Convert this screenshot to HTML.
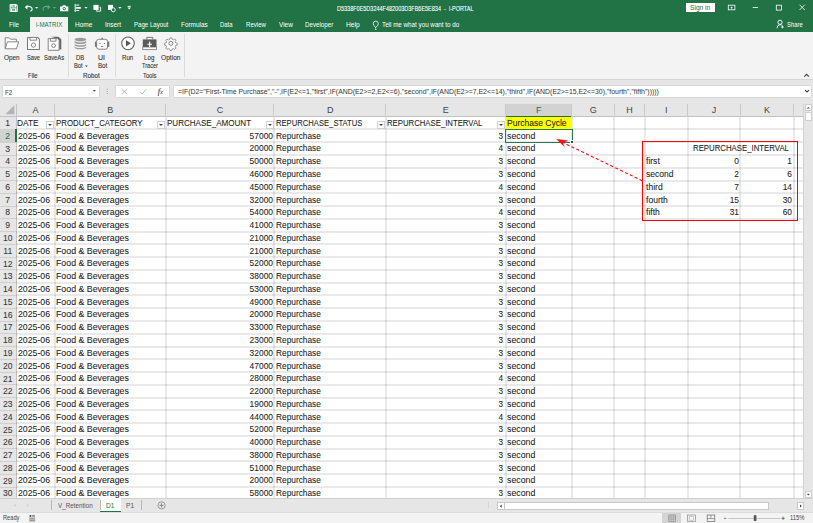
<!DOCTYPE html><html><head><meta charset="utf-8"><style>
*{margin:0;padding:0;box-sizing:border-box}
html,body{width:813px;height:523px;overflow:hidden;background:#fff;font-family:"Liberation Sans",sans-serif;position:relative}
.a{position:absolute}
.t{position:absolute;white-space:nowrap;line-height:1}
.s{-webkit-text-stroke:0.07px currentColor}
.s2{-webkit-text-stroke:0.1px currentColor}
svg{position:absolute;overflow:visible}
</style></head><body><div class="a" style="left:0;top:0;width:813px;height:31.5px;background:#217346"></div>
<svg style="left:0;top:0" width="140" height="17" viewBox="0 0 140 17">
<g fill="none" stroke="#fff" stroke-width="1.1">
<path d="M10.2 4.8h6.2l0.8 0.8v5.6h-7z"/><rect x="11.8" y="4.8" width="3.8" height="2.2"/><rect x="11.6" y="8.8" width="4.2" height="2.4"/>
<path d="M26 7.3 q3.5-2.2 5.8 0.6 q1.2 2.2-1.4 3.3"/>
</g>
<path d="M24.8 7.2l2.6-2.4v4.6z" fill="#fff"/>
<path d="M34.9 7.1h3.4l-1.7 1.7z" fill="#fff"/>
<g opacity="0.35"><path d="M49 7.3 q-3.5-2.2 -5.8 0.6 q-0.6 1.4 0.4 2.6" fill="none" stroke="#fff" stroke-width="1.1"/><path d="M50.3 7.2l-2.6-2.4v4.6z" fill="#fff"/><path d="M52.9 7.1h3.2l-1.6 1.6z" fill="#fff"/></g>
<path d="M60.1 6.4h2l0.9-1.1h2.4l0.9 1.1h2v4.8h-8.2z" fill="#fff"/><circle cx="64.2" cy="8.6" r="1.6" fill="#217346"/><circle cx="64.2" cy="8.6" r="0.8" fill="#fff"/>
<g fill="#fff"><rect x="74.7" y="3.9" width="1" height="8.1"/><rect x="76.2" y="4.6" width="3" height="1"/><rect x="76.2" y="7" width="4.6" height="1.8"/><rect x="76.2" y="10" width="3" height="1"/></g>
<path d="M84.4 7.1h3.2l-1.6 1.6z" fill="#fff"/>
<rect x="93.4" y="4.9" width="5.2" height="5" fill="#fff"/><path d="M99.6 7.2h1v4h-4.2v-1" fill="none" stroke="#fff" stroke-width="0.9"/>
<rect x="108" y="4.9" width="5" height="5" fill="#fff"/><circle cx="113.3" cy="9.8" r="2" fill="#217346" stroke="#fff" stroke-width="0.9"/>
<path d="M118.3 7.1h3.2l-1.6 1.6z" fill="#fff"/>
<rect x="127.6" y="5.9" width="3.2" height="0.9" fill="#fff"/><path d="M127.5 7.6h3.4l-1.7 2z" fill="#fff"/>
</svg>
<div class="a" style="left:685.5px;top:2.6px;width:29.4px;height:9.7px;background:#fff"></div>
<svg style="left:720px;top:0" width="93" height="32" viewBox="720 0 93 32">
<rect x="728.3" y="5.2" width="6.6" height="4.6" fill="none" stroke="#fff" stroke-width="0.8"/><path d="M730.4 7.9l1.2-1.4 1.2 1.4z" fill="#fff"/><rect x="731.3" y="7.6" width="0.6" height="1.6" fill="#fff"/>
<rect x="752.7" y="7.2" width="5.3" height="0.8" fill="#fff"/>
<rect x="776.3" y="5.2" width="5.2" height="4.9" fill="none" stroke="#fff" stroke-width="0.8"/>
<path d="M799.5 4.7l5.3 5.3M804.8 4.7l-5.3 5.3" stroke="#fff" stroke-width="0.8"/>
<circle cx="780" cy="22.3" r="2.1" fill="none" stroke="#fff" stroke-width="0.9"/><path d="M776.9 28.2q0.5-3.6 3.1-3.6q1.6 0 2.5 1.3" fill="none" stroke="#fff" stroke-width="0.9"/><path d="M782.4 25.6v2.8M781 27h2.8" stroke="#fff" stroke-width="0.8"/>
</svg>
<div class="a" style="left:30.1px;top:17px;width:37.9px;height:15px;background:#f3f3f3"></div>
<svg style="left:370px;top:17px" width="12" height="15" viewBox="370 17 12 15"><path d="M375.6 28.6v-1.4q-2.3-1.4-2.3-3.6a2.5 2.5 0 0 1 5 0q0 2.2-2.3 3.6" fill="none" stroke="#fff" stroke-width="0.8"/><rect x="374.9" y="28.9" width="1.6" height="0.7" fill="#fff"/></svg>
<div class="a" style="left:0;top:31.5px;width:813px;height:48px;background:#f3f3f3;border-bottom:1px solid #d6d6d6"></div>
<div class="a" style="left:67.7px;top:34px;width:1px;height:42.5px;background:#dcdcdc"></div>
<div class="a" style="left:114.9px;top:34px;width:1px;height:42.5px;background:#dcdcdc"></div>
<div class="a" style="left:184px;top:34px;width:1px;height:42.5px;background:#dcdcdc"></div>
<svg style="left:0;top:32px" width="190" height="20" viewBox="0 32 190 20">
<g fill="#fcfcfc" stroke="#7a7a7a" stroke-width="0.9" stroke-linejoin="round">
<path d="M5.2 48.8v-11h4l1.2 1.4h6v2.4"/><path d="M5.2 48.8l2.2-7h11.3l-2.2 7z"/>
<path d="M27.5 37.4h10.2l1.7 1.7v10.4h-11.9z" stroke-width="1.05"/><rect x="30" y="37.4" width="6.6" height="2.8"/><circle cx="33.5" cy="45.1" r="2.1"/>
</g><path d="M51 36.7h7.4l2.9 2.6v10.3h-2.2v-10z" fill="#666"/><g fill="#fcfcfc" stroke="#7a7a7a" stroke-width="0.9" stroke-linejoin="round"><path d="M48.2 38.6h9.4l1.5 1.5v10.2h-10.9z"/><rect x="50.4" y="38.6" width="5.6" height="2.6"/><circle cx="53.6" cy="45.6" r="1.9"/>
</g>
<g fill="#9a9a9a">
<ellipse cx="80.4" cy="39.6" rx="5.8" ry="1.8"/>
<path d="M74.6 40.6v1.6q0 1.8 5.8 1.8t5.8-1.8v-1.6q0 1.8-5.8 1.8t-5.8-1.8z"/>
<path d="M74.6 43.4v1.6q0 1.8 5.8 1.8t5.8-1.8v-1.6q0 1.8-5.8 1.8t-5.8-1.8z"/>
<path d="M74.6 46.2v1.3q0 1.8 5.8 1.8t5.8-1.8v-1.3q0 1.8-5.8 1.8t-5.8-1.8z"/>
</g>
<rect x="96.6" y="39.3" width="11" height="9.9" rx="2.2" fill="#fbfbfb" stroke="#777" stroke-width="0.9"/>
<rect x="94.9" y="41.6" width="1.8" height="5.2" fill="#777"/><rect x="107.5" y="41.6" width="1.8" height="5.2" fill="#777"/>
<rect x="101.4" y="37.7" width="1.4" height="1.6" fill="#777"/>
<rect x="99.4" y="43" width="1.1" height="1" fill="#666"/><rect x="103.8" y="43" width="1.1" height="1" fill="#666"/><rect x="101" y="46" width="2.2" height="0.8" fill="#666"/>
<circle cx="128" cy="43.35" r="6.3" fill="#fdfdfd" stroke="#5e5e5e" stroke-width="1.05"/><path d="M126 40.2v6.3l4.9-3.15z" fill="#555"/>
<path d="M146.8 39.4v-2h6v2" fill="none" stroke="#666" stroke-width="0.9"/>
<rect x="142.8" y="39.4" width="13.7" height="7.6" fill="#5a5a5a"/><rect x="142.8" y="47" width="13.7" height="2.7" fill="#f8f8f8" stroke="#666" stroke-width="0.7"/>
<path d="M149.65 41.6v5.4M147.3 44.2h4.7" stroke="#fff" stroke-width="1.1"/>
<g transform="translate(170.9 43.35) scale(0.88)"><path d="M-1 -6.2h2l0.4 1.6 1.5 0.7 1.5-0.9 1.4 1.4-0.9 1.5 0.6 1.5 1.7 0.4v2l-1.7 0.4-0.6 1.5 0.9 1.5-1.4 1.4-1.5-0.9-1.5 0.6-0.4 1.7h-2l-0.4-1.7-1.5-0.6-1.5 0.9-1.4-1.4 0.9-1.5-0.6-1.5-1.7-0.4v-2l1.7-0.4 0.6-1.5-0.9-1.5 1.4-1.4 1.5 0.9 1.5-0.7z" fill="#fcfcfc" stroke="#707070" stroke-width="0.8" stroke-linejoin="round"/><circle r="2.3" fill="none" stroke="#707070" stroke-width="1"/></g>
</svg>
<svg style="left:0;top:0" width="813" height="80"><path d="M84.9 65.6h3l-1.5 1.5z" fill="#444"/><path d="M804.3 76.7l2.3-2.3 2.3 2.3" fill="none" stroke="#444" stroke-width="1.15"/></svg>
<div class="a" style="left:0;top:79.5px;width:813px;height:24.1px;background:#e6e6e6"></div>
<div class="a" style="left:1.5px;top:85.0px;width:98px;height:12.8px;background:#fff;border:1px solid #d6d6d6;border-radius:1.5px"></div>
<div class="a" style="left:114.8px;top:85.0px;width:55.5px;height:12.8px;background:#fff;border:1px solid #d6d6d6;border-radius:1.5px"></div>
<div class="a" style="left:172.6px;top:85.0px;width:639px;height:12.8px;background:#fff;border:1px solid #d6d6d6;border-radius:1.5px"></div>
<svg style="left:0;top:80px" width="813" height="22" viewBox="0 80 813 22">
<path d="M92.6 89.9h3.5l-1.75 1.8z" fill="#555"/>
<g fill="#9a9a9a"><rect x="106.8" y="88.8" width="0.9" height="0.9"/><rect x="106.8" y="91" width="0.9" height="0.9"/><rect x="106.8" y="93.2" width="0.9" height="0.9"/></g>
<path d="M121.6 89.2l5.5 4.8M127.1 89.2l-5.5 4.8" stroke="#a8a8a8" stroke-width="0.8"/>
<path d="M140 91.8l2 2.2 4.2-4.8" fill="none" stroke="#a8a8a8" stroke-width="0.8"/>
<path d="M805 90.1l2 1.9 2-1.9" fill="none" stroke="#444" stroke-width="1.1"/>
</svg>
<div class="a" style="left:0;top:103.6px;width:803.6px;height:13.100000000000009px;background:#e6e6e6"></div>
<div class="a" style="left:0;top:116.7px;width:16px;height:381.7px;background:#e6e6e6"></div>
<div class="a" style="left:15.5px;top:103.6px;width:1px;height:394.79999999999995px;background:#c3c3c3"></div>
<div class="a" style="left:0;top:116.10000000000001px;width:803.6px;height:1px;background:#c3c3c3"></div>
<svg style="left:0;top:100px" width="20" height="20" viewBox="0 100 20 20"><path d="M14.3 105.3v9h-8.9z" fill="#b4b4b4"/></svg>
<div class="a" style="left:505.5px;top:103.6px;width:66.5px;height:13.100000000000009px;background:#d2d2d2;border-bottom:1.6px solid #217346"></div>
<div class="a" style="left:54px;top:103.6px;width:1px;height:13.100000000000009px;background:#c9c9c9"></div>
<div class="a" style="left:164.6px;top:103.6px;width:1px;height:13.100000000000009px;background:#c9c9c9"></div>
<div class="a" style="left:273.4px;top:103.6px;width:1px;height:13.100000000000009px;background:#c9c9c9"></div>
<div class="a" style="left:385px;top:103.6px;width:1px;height:13.100000000000009px;background:#c9c9c9"></div>
<div class="a" style="left:504.5px;top:103.6px;width:1px;height:13.100000000000009px;background:#c9c9c9"></div>
<div class="a" style="left:571px;top:103.6px;width:1px;height:13.100000000000009px;background:#c9c9c9"></div>
<div class="a" style="left:613.5px;top:103.6px;width:1px;height:13.100000000000009px;background:#c9c9c9"></div>
<div class="a" style="left:643.7px;top:103.6px;width:1px;height:13.100000000000009px;background:#c9c9c9"></div>
<div class="a" style="left:686.6px;top:103.6px;width:1px;height:13.100000000000009px;background:#c9c9c9"></div>
<div class="a" style="left:739.5px;top:103.6px;width:1px;height:13.100000000000009px;background:#c9c9c9"></div>
<div class="a" style="left:792.6px;top:103.6px;width:1px;height:13.100000000000009px;background:#c9c9c9"></div>
<div class="a" style="left:802.6px;top:103.6px;width:1px;height:13.100000000000009px;background:#c9c9c9"></div>
<div class="t" style="left:16px;width:39px;text-align:center;top:105.6px;font-size:9px;color:#444">A</div>
<div class="t" style="left:55px;width:110.6px;text-align:center;top:105.6px;font-size:9px;color:#444">B</div>
<div class="t" style="left:165.6px;width:108.79999999999998px;text-align:center;top:105.6px;font-size:9px;color:#444">C</div>
<div class="t" style="left:274.4px;width:111.60000000000002px;text-align:center;top:105.6px;font-size:9px;color:#444">D</div>
<div class="t" style="left:386px;width:119.5px;text-align:center;top:105.6px;font-size:9px;color:#444">E</div>
<div class="t" style="left:505.5px;width:66.5px;text-align:center;top:105.6px;font-size:9px;color:#217346">F</div>
<div class="t" style="left:572px;width:42.5px;text-align:center;top:105.6px;font-size:9px;color:#444">G</div>
<div class="t" style="left:614.5px;width:30.200000000000045px;text-align:center;top:105.6px;font-size:9px;color:#444">H</div>
<div class="t" style="left:644.7px;width:42.89999999999998px;text-align:center;top:105.6px;font-size:9px;color:#444">I</div>
<div class="t" style="left:687.6px;width:52.89999999999998px;text-align:center;top:105.6px;font-size:9px;color:#444">J</div>
<div class="t" style="left:740.5px;width:53.10000000000002px;text-align:center;top:105.6px;font-size:9px;color:#444">K</div>
<div class="a" style="left:54px;top:116.7px;width:2px;height:381.7px;background:rgba(0,0,0,0.085)"></div>
<div class="a" style="left:165px;top:116.7px;width:2px;height:381.7px;background:rgba(0,0,0,0.085)"></div>
<div class="a" style="left:273px;top:116.7px;width:2px;height:381.7px;background:rgba(0,0,0,0.085)"></div>
<div class="a" style="left:385px;top:116.7px;width:2px;height:381.7px;background:rgba(0,0,0,0.085)"></div>
<div class="a" style="left:505px;top:116.7px;width:2px;height:381.7px;background:rgba(0,0,0,0.085)"></div>
<div class="a" style="left:571px;top:116.7px;width:2px;height:381.7px;background:rgba(0,0,0,0.085)"></div>
<div class="a" style="left:613px;top:116.7px;width:2px;height:381.7px;background:rgba(0,0,0,0.085)"></div>
<div class="a" style="left:644px;top:116.7px;width:2px;height:381.7px;background:rgba(0,0,0,0.085)"></div>
<div class="a" style="left:687px;top:116.7px;width:2px;height:381.7px;background:rgba(0,0,0,0.085)"></div>
<div class="a" style="left:739px;top:116.7px;width:2px;height:381.7px;background:rgba(0,0,0,0.085)"></div>
<div class="a" style="left:793px;top:116.7px;width:2px;height:381.7px;background:rgba(0,0,0,0.085)"></div>
<div class="a" style="left:803px;top:116.7px;width:2px;height:381.7px;background:rgba(0,0,0,0.085)"></div>
<div class="a" style="left:16px;top:128.47px;width:786.7px;height:2px;background:rgba(0,0,0,0.085)"></div>
<div class="a" style="left:0;top:128.97px;width:15.5px;height:1px;background:#cfcfcf"></div>
<div class="a" style="left:16px;top:141.24px;width:786.7px;height:2px;background:rgba(0,0,0,0.085)"></div>
<div class="a" style="left:0;top:141.74px;width:15.5px;height:1px;background:#cfcfcf"></div>
<div class="a" style="left:16px;top:154.01px;width:786.7px;height:2px;background:rgba(0,0,0,0.085)"></div>
<div class="a" style="left:0;top:154.51px;width:15.5px;height:1px;background:#cfcfcf"></div>
<div class="a" style="left:16px;top:166.78px;width:786.7px;height:2px;background:rgba(0,0,0,0.085)"></div>
<div class="a" style="left:0;top:167.28px;width:15.5px;height:1px;background:#cfcfcf"></div>
<div class="a" style="left:16px;top:179.55px;width:786.7px;height:2px;background:rgba(0,0,0,0.085)"></div>
<div class="a" style="left:0;top:180.05px;width:15.5px;height:1px;background:#cfcfcf"></div>
<div class="a" style="left:16px;top:192.32px;width:786.7px;height:2px;background:rgba(0,0,0,0.085)"></div>
<div class="a" style="left:0;top:192.82px;width:15.5px;height:1px;background:#cfcfcf"></div>
<div class="a" style="left:16px;top:205.09px;width:786.7px;height:2px;background:rgba(0,0,0,0.085)"></div>
<div class="a" style="left:0;top:205.59px;width:15.5px;height:1px;background:#cfcfcf"></div>
<div class="a" style="left:16px;top:217.86px;width:786.7px;height:2px;background:rgba(0,0,0,0.085)"></div>
<div class="a" style="left:0;top:218.36px;width:15.5px;height:1px;background:#cfcfcf"></div>
<div class="a" style="left:16px;top:230.63px;width:786.7px;height:2px;background:rgba(0,0,0,0.085)"></div>
<div class="a" style="left:0;top:231.13px;width:15.5px;height:1px;background:#cfcfcf"></div>
<div class="a" style="left:16px;top:243.40px;width:786.7px;height:2px;background:rgba(0,0,0,0.085)"></div>
<div class="a" style="left:0;top:243.90px;width:15.5px;height:1px;background:#cfcfcf"></div>
<div class="a" style="left:16px;top:256.17px;width:786.7px;height:2px;background:rgba(0,0,0,0.085)"></div>
<div class="a" style="left:0;top:256.67px;width:15.5px;height:1px;background:#cfcfcf"></div>
<div class="a" style="left:16px;top:268.94px;width:786.7px;height:2px;background:rgba(0,0,0,0.085)"></div>
<div class="a" style="left:0;top:269.44px;width:15.5px;height:1px;background:#cfcfcf"></div>
<div class="a" style="left:16px;top:281.71px;width:786.7px;height:2px;background:rgba(0,0,0,0.085)"></div>
<div class="a" style="left:0;top:282.21px;width:15.5px;height:1px;background:#cfcfcf"></div>
<div class="a" style="left:16px;top:294.48px;width:786.7px;height:2px;background:rgba(0,0,0,0.085)"></div>
<div class="a" style="left:0;top:294.98px;width:15.5px;height:1px;background:#cfcfcf"></div>
<div class="a" style="left:16px;top:307.25px;width:786.7px;height:2px;background:rgba(0,0,0,0.085)"></div>
<div class="a" style="left:0;top:307.75px;width:15.5px;height:1px;background:#cfcfcf"></div>
<div class="a" style="left:16px;top:320.02px;width:786.7px;height:2px;background:rgba(0,0,0,0.085)"></div>
<div class="a" style="left:0;top:320.52px;width:15.5px;height:1px;background:#cfcfcf"></div>
<div class="a" style="left:16px;top:332.79px;width:786.7px;height:2px;background:rgba(0,0,0,0.085)"></div>
<div class="a" style="left:0;top:333.29px;width:15.5px;height:1px;background:#cfcfcf"></div>
<div class="a" style="left:16px;top:345.56px;width:786.7px;height:2px;background:rgba(0,0,0,0.085)"></div>
<div class="a" style="left:0;top:346.06px;width:15.5px;height:1px;background:#cfcfcf"></div>
<div class="a" style="left:16px;top:358.33px;width:786.7px;height:2px;background:rgba(0,0,0,0.085)"></div>
<div class="a" style="left:0;top:358.83px;width:15.5px;height:1px;background:#cfcfcf"></div>
<div class="a" style="left:16px;top:371.10px;width:786.7px;height:2px;background:rgba(0,0,0,0.085)"></div>
<div class="a" style="left:0;top:371.60px;width:15.5px;height:1px;background:#cfcfcf"></div>
<div class="a" style="left:16px;top:383.87px;width:786.7px;height:2px;background:rgba(0,0,0,0.085)"></div>
<div class="a" style="left:0;top:384.37px;width:15.5px;height:1px;background:#cfcfcf"></div>
<div class="a" style="left:16px;top:396.64px;width:786.7px;height:2px;background:rgba(0,0,0,0.085)"></div>
<div class="a" style="left:0;top:397.14px;width:15.5px;height:1px;background:#cfcfcf"></div>
<div class="a" style="left:16px;top:409.41px;width:786.7px;height:2px;background:rgba(0,0,0,0.085)"></div>
<div class="a" style="left:0;top:409.91px;width:15.5px;height:1px;background:#cfcfcf"></div>
<div class="a" style="left:16px;top:422.18px;width:786.7px;height:2px;background:rgba(0,0,0,0.085)"></div>
<div class="a" style="left:0;top:422.68px;width:15.5px;height:1px;background:#cfcfcf"></div>
<div class="a" style="left:16px;top:434.95px;width:786.7px;height:2px;background:rgba(0,0,0,0.085)"></div>
<div class="a" style="left:0;top:435.45px;width:15.5px;height:1px;background:#cfcfcf"></div>
<div class="a" style="left:16px;top:447.72px;width:786.7px;height:2px;background:rgba(0,0,0,0.085)"></div>
<div class="a" style="left:0;top:448.22px;width:15.5px;height:1px;background:#cfcfcf"></div>
<div class="a" style="left:16px;top:460.49px;width:786.7px;height:2px;background:rgba(0,0,0,0.085)"></div>
<div class="a" style="left:0;top:460.99px;width:15.5px;height:1px;background:#cfcfcf"></div>
<div class="a" style="left:16px;top:473.26px;width:786.7px;height:2px;background:rgba(0,0,0,0.085)"></div>
<div class="a" style="left:0;top:473.76px;width:15.5px;height:1px;background:#cfcfcf"></div>
<div class="a" style="left:16px;top:486.03px;width:786.7px;height:2px;background:rgba(0,0,0,0.085)"></div>
<div class="a" style="left:0;top:486.53px;width:15.5px;height:1px;background:#cfcfcf"></div>
<div class="a" style="left:16px;top:498.80px;width:786.7px;height:2px;background:rgba(0,0,0,0.085)"></div>
<div class="a" style="left:0;top:499.30px;width:15.5px;height:1px;background:#cfcfcf"></div>
<div class="a" style="left:0;top:129.47px;width:15.5px;height:12.77px;background:#d2d2d2"></div>
<div class="a" style="left:14.9px;top:129.47px;width:1.7px;height:12.77px;background:#217346"></div>
<div class="t s" style="left:0;width:15.5px;text-align:center;top:119.10px;font-size:8.6px;color:#383838">1</div>
<div class="t s" style="left:0;width:15.5px;text-align:center;top:131.87px;font-size:8.6px;color:#217346">2</div>
<div class="t s" style="left:0;width:15.5px;text-align:center;top:144.64px;font-size:8.6px;color:#383838">3</div>
<div class="t s" style="left:0;width:15.5px;text-align:center;top:157.41px;font-size:8.6px;color:#383838">4</div>
<div class="t s" style="left:0;width:15.5px;text-align:center;top:170.18px;font-size:8.6px;color:#383838">5</div>
<div class="t s" style="left:0;width:15.5px;text-align:center;top:182.95px;font-size:8.6px;color:#383838">6</div>
<div class="t s" style="left:0;width:15.5px;text-align:center;top:195.72px;font-size:8.6px;color:#383838">7</div>
<div class="t s" style="left:0;width:15.5px;text-align:center;top:208.49px;font-size:8.6px;color:#383838">8</div>
<div class="t s" style="left:0;width:15.5px;text-align:center;top:221.26px;font-size:8.6px;color:#383838">9</div>
<div class="t s" style="left:0;width:15.5px;text-align:center;top:234.03px;font-size:8.6px;color:#383838">10</div>
<div class="t s" style="left:0;width:15.5px;text-align:center;top:246.80px;font-size:8.6px;color:#383838">11</div>
<div class="t s" style="left:0;width:15.5px;text-align:center;top:259.57px;font-size:8.6px;color:#383838">12</div>
<div class="t s" style="left:0;width:15.5px;text-align:center;top:272.34px;font-size:8.6px;color:#383838">13</div>
<div class="t s" style="left:0;width:15.5px;text-align:center;top:285.11px;font-size:8.6px;color:#383838">14</div>
<div class="t s" style="left:0;width:15.5px;text-align:center;top:297.88px;font-size:8.6px;color:#383838">15</div>
<div class="t s" style="left:0;width:15.5px;text-align:center;top:310.65px;font-size:8.6px;color:#383838">16</div>
<div class="t s" style="left:0;width:15.5px;text-align:center;top:323.42px;font-size:8.6px;color:#383838">17</div>
<div class="t s" style="left:0;width:15.5px;text-align:center;top:336.19px;font-size:8.6px;color:#383838">18</div>
<div class="t s" style="left:0;width:15.5px;text-align:center;top:348.96px;font-size:8.6px;color:#383838">19</div>
<div class="t s" style="left:0;width:15.5px;text-align:center;top:361.73px;font-size:8.6px;color:#383838">20</div>
<div class="t s" style="left:0;width:15.5px;text-align:center;top:374.50px;font-size:8.6px;color:#383838">21</div>
<div class="t s" style="left:0;width:15.5px;text-align:center;top:387.27px;font-size:8.6px;color:#383838">22</div>
<div class="t s" style="left:0;width:15.5px;text-align:center;top:400.04px;font-size:8.6px;color:#383838">23</div>
<div class="t s" style="left:0;width:15.5px;text-align:center;top:412.81px;font-size:8.6px;color:#383838">24</div>
<div class="t s" style="left:0;width:15.5px;text-align:center;top:425.58px;font-size:8.6px;color:#383838">25</div>
<div class="t s" style="left:0;width:15.5px;text-align:center;top:438.35px;font-size:8.6px;color:#383838">26</div>
<div class="t s" style="left:0;width:15.5px;text-align:center;top:451.12px;font-size:8.6px;color:#383838">27</div>
<div class="t s" style="left:0;width:15.5px;text-align:center;top:463.89px;font-size:8.6px;color:#383838">28</div>
<div class="t s" style="left:0;width:15.5px;text-align:center;top:476.66px;font-size:8.6px;color:#383838">29</div>
<div class="t s" style="left:0;width:15.5px;text-align:center;top:489.43px;font-size:8.6px;color:#383838">30</div>
<div class="a" style="left:505.5px;top:116.7px;width:66px;height:12.17px;background:#ffff00"></div>
<div class="a" style="left:46.4px;top:120.60px;width:8px;height:8.2px;background:#fff;border:1px solid #d0d0d0"></div>
<div class="a" style="left:48.4px;top:123.70px;width:0;height:0;border-left:2.2px solid transparent;border-right:2.2px solid transparent;border-top:2.4px solid #444"></div>
<div class="a" style="left:157.0px;top:120.60px;width:8px;height:8.2px;background:#fff;border:1px solid #d0d0d0"></div>
<div class="a" style="left:159.0px;top:123.70px;width:0;height:0;border-left:2.2px solid transparent;border-right:2.2px solid transparent;border-top:2.4px solid #444"></div>
<div class="a" style="left:265.79999999999995px;top:120.60px;width:8px;height:8.2px;background:#fff;border:1px solid #d0d0d0"></div>
<div class="a" style="left:267.79999999999995px;top:123.70px;width:0;height:0;border-left:2.2px solid transparent;border-right:2.2px solid transparent;border-top:2.4px solid #444"></div>
<div class="a" style="left:377.4px;top:120.60px;width:8px;height:8.2px;background:#fff;border:1px solid #d0d0d0"></div>
<div class="a" style="left:379.4px;top:123.70px;width:0;height:0;border-left:2.2px solid transparent;border-right:2.2px solid transparent;border-top:2.4px solid #444"></div>
<div class="a" style="left:496.9px;top:120.60px;width:8px;height:8.2px;background:#fff;border:1px solid #d0d0d0"></div>
<div class="a" style="left:498.9px;top:123.70px;width:0;height:0;border-left:2.2px solid transparent;border-right:2.2px solid transparent;border-top:2.4px solid #444"></div>
<div class="a" style="left:505px;top:128.87px;width:67.5px;height:13.97px;border:1.4px solid #2b7a4b"></div>
<div class="a" style="left:570.6px;top:141.04px;width:2.4px;height:2.4px;background:#1e5c38;outline:0.4px solid #fff"></div>
<div class="a" style="left:642.0px;top:140.8px;width:156.1px;height:79.9px;border:1.2px solid #ff0000"></div>
<svg style="left:0;top:0" width="813" height="523"><line x1="642.4" y1="180.8" x2="563" y2="142.6" stroke="#ff1010" stroke-width="1.1" stroke-dasharray="3.2,2.2"/><path d="M556.2 138.9L568 140.5L562.8 143.2L565 147.4z" fill="#ff1010"/></svg>
<div class="a" style="left:802.7px;top:103.6px;width:10.3px;height:395.29999999999995px;background:#e6e6e6;border-left:0.9px solid #d2d2d2"></div>
<div class="a" style="left:804.5px;top:104.3px;width:7.7px;height:6.9px;background:#fff;border:0.7px solid #cfcfcf"></div>
<div class="a" style="left:804.5px;top:111.5px;width:7.7px;height:9.1px;background:#fff;border:0.7px solid #cfcfcf"></div>
<div class="a" style="left:804.5px;top:491.4px;width:7.7px;height:6.6px;background:#fff;border:0.7px solid #cfcfcf"></div>
<svg style="left:0;top:0" width="813" height="523"><path d="M806.8 108.6l1.55-1.6 1.55 1.6z" fill="#444"/><path d="M806.8 493.80h3.1l-1.55 1.6z" fill="#444"/></svg>
<div class="a" style="left:0;top:498.4px;width:813px;height:13.600000000000023px;background:#e6e6e6;border-top:1px solid #cfcfcf"></div>
<div class="a" style="left:100px;top:498.4px;width:21.3px;height:13.600000000000023px;background:#fff;border-bottom:1.4px solid #217346"></div>
<div class="a" style="left:50.5px;top:499.9px;width:0.8px;height:10.5px;background:#b8b8b8"></div>
<div class="a" style="left:100px;top:499.9px;width:0.8px;height:10.5px;background:#b8b8b8"></div>
<div class="a" style="left:140.6px;top:499.9px;width:0.8px;height:10.5px;background:#b8b8b8"></div>
<svg style="left:0;top:0" width="813" height="523">
<path d="M15.4 503.8l-1.6 1.5 1.6 1.5z" fill="#c4c4c4"/><path d="M27.2 503.8l1.6 1.5-1.6 1.5z" fill="#c4c4c4"/>
<circle cx="161.6" cy="505.35" r="3.6" fill="none" stroke="#888" stroke-width="0.8"/><path d="M161.6 503.3v4.1M159.55 505.35h4.1" stroke="#777" stroke-width="0.8"/>
<g fill="#aaa"><rect x="488.2" y="502.5" width="0.8" height="0.8"/><rect x="488.2" y="504.6" width="0.8" height="0.8"/><rect x="488.2" y="506.7" width="0.8" height="0.8"/></g>
</svg>
<div class="a" style="left:496.7px;top:502.4px;width:272px;height:7.6px;background:#fff;border:0.7px solid #c8c8c8"></div>
<div class="a" style="left:796.8px;top:502.1px;width:7.6px;height:7.6px;background:#fff;border:0.7px solid #c8c8c8"></div>
<div class="a" style="left:504.2px;top:502.4px;width:0.7px;height:7.6px;background:#c8c8c8"></div>
<svg style="left:0;top:0" width="813" height="523"><path d="M501.6 504.6l-1.7 1.6 1.7 1.6z" fill="#333"/><path d="M800 504.4l1.7 1.6-1.7 1.6z" fill="#333"/></svg>
<div class="a" style="left:0;top:512.4px;width:813px;height:11px;background:#f3f3f3;border-top:0.8px solid #dcdcdc"></div>
<div class="a" style="left:662.3px;top:513.1px;width:19.2px;height:9.9px;background:#d4d4d4"></div>
<svg style="left:0;top:0" width="813" height="523">
<rect x="29.3" y="517.6" width="5.8" height="3.9" fill="#9a9a9a"/><circle cx="30.4" cy="516" r="1" fill="#444"/><rect x="31.8" y="515.4" width="3.2" height="1.1" fill="#555"/><path d="M29.3 519.4h5.8" stroke="#ddd" stroke-width="0.5"/>
<rect x="668.8" y="515" width="6.8" height="6.4" fill="none" stroke="#8a8a8a" stroke-width="0.7"/><path d="M668.8 517.1h6.8M668.8 519.2h6.8M671.1 515v6.4M673.3 515v6.4" stroke="#8a8a8a" stroke-width="0.5"/>
<rect x="687.4" y="515" width="8" height="6.4" fill="none" stroke="#8a8a8a" stroke-width="0.7"/><rect x="689.2" y="516.4" width="4.4" height="3.8" fill="none" stroke="#aaa" stroke-width="0.5"/>
<rect x="707.2" y="515" width="7.6" height="6.4" fill="none" stroke="#666" stroke-width="0.7"/><path d="M707.2 518.6h7.6M710.9 515v3.6" stroke="#666" stroke-width="0.6"/>
<rect x="724" y="517.8" width="2.2" height="0.8" fill="#555"/>
<rect x="728.3" y="518" width="52" height="0.5" fill="#9a9a9a"/>
<rect x="753.8" y="515.2" width="2.6" height="5.8" fill="#555"/>
<path d="M781.5 518.3h3.2M783.1 516.7v3.2" stroke="#555" stroke-width="0.8"/>
</svg>
<div class="t s2" style="left:337.37px;top:5.00px;font-size:7.6px;color:#fff;transform:scaleX(0.7243);transform-origin:0 0">D5338F0E5D3244F482003D3FB6E5E834&nbsp;&nbsp;-&nbsp;&nbsp;i-PORTAL</div>
<div class="t " style="left:690.10px;top:4.80px;font-size:6.6px;color:#217346;transform:scaleX(1.0062);transform-origin:0 0">Sign in</div>
<div class="t " style="left:786.65px;top:21.80px;font-size:6.6px;color:#fff;transform:scaleX(0.8919);transform-origin:0 0">Share</div>
<div class="t " style="left:8.83px;top:22.30px;font-size:6.6px;color:#fff;transform:scaleX(0.9458);transform-origin:0 0">File</div>
<div class="t " style="left:75.21px;top:22.30px;font-size:6.6px;color:#fff;transform:scaleX(0.9880);transform-origin:0 0">Home</div>
<div class="t " style="left:105.42px;top:22.30px;font-size:6.6px;color:#fff;transform:scaleX(0.9677);transform-origin:0 0">Insert</div>
<div class="t " style="left:134.13px;top:22.30px;font-size:6.6px;color:#fff;transform:scaleX(0.9244);transform-origin:0 0">Page Layout</div>
<div class="t " style="left:180.62px;top:22.30px;font-size:6.6px;color:#fff;transform:scaleX(0.9703);transform-origin:0 0">Formulas</div>
<div class="t " style="left:220.04px;top:22.30px;font-size:6.6px;color:#fff;transform:scaleX(0.8976);transform-origin:0 0">Data</div>
<div class="t " style="left:246.14px;top:22.30px;font-size:6.6px;color:#fff;transform:scaleX(0.9216);transform-origin:0 0">Review</div>
<div class="t " style="left:278.62px;top:22.30px;font-size:6.6px;color:#fff;transform:scaleX(0.9705);transform-origin:0 0">View</div>
<div class="t " style="left:305.13px;top:22.30px;font-size:6.6px;color:#fff;transform:scaleX(0.9395);transform-origin:0 0">Developer</div>
<div class="t " style="left:345.60px;top:22.30px;font-size:6.6px;color:#fff;transform:scaleX(1.0180);transform-origin:0 0">Help</div>
<div class="t " style="left:382.12px;top:22.30px;font-size:6.6px;color:#fff;transform:scaleX(0.9493);transform-origin:0 0">Tell me what you want to do</div>
<div class="t " style="left:35.53px;top:22.30px;font-size:6.6px;color:#217346;transform:scaleX(0.9377);transform-origin:0 0">i-MATRIX</div>
<div class="t s2" style="left:3.72px;top:54.90px;font-size:6.5px;color:#333;transform:scaleX(0.9850);transform-origin:0 0">Open</div>
<div class="t s2" style="left:26.56px;top:54.90px;font-size:6.5px;color:#333;transform:scaleX(0.8756);transform-origin:0 0">Save</div>
<div class="t s2" style="left:44.45px;top:54.90px;font-size:6.5px;color:#333;transform:scaleX(0.8971);transform-origin:0 0">SaveAs</div>
<div class="t s2" style="left:76.35px;top:54.90px;font-size:6.5px;color:#333;transform:scaleX(0.8968);transform-origin:0 0">DB</div>
<div class="t s2" style="left:73.65px;top:63.20px;font-size:6.5px;color:#333;transform:scaleX(0.8903);transform-origin:0 0">Bot</div>
<div class="t s2" style="left:98.48px;top:54.90px;font-size:6.5px;color:#333;transform:scaleX(1.0664);transform-origin:0 0">UI</div>
<div class="t s2" style="left:97.63px;top:63.20px;font-size:6.5px;color:#333;transform:scaleX(0.9460);transform-origin:0 0">Bot</div>
<div class="t s2" style="left:122.23px;top:54.90px;font-size:6.5px;color:#333;transform:scaleX(0.9411);transform-origin:0 0">Run</div>
<div class="t s2" style="left:144.23px;top:54.90px;font-size:6.5px;color:#333;transform:scaleX(0.9524);transform-origin:0 0">Log</div>
<div class="t s2" style="left:141.86px;top:63.20px;font-size:6.5px;color:#333;transform:scaleX(0.8612);transform-origin:0 0">Tracer</div>
<div class="t s2" style="left:160.90px;top:54.90px;font-size:6.5px;color:#333;transform:scaleX(1.0176);transform-origin:0 0">Option</div>
<div class="t s2" style="left:82.72px;top:73.00px;font-size:6.5px;color:#333;transform:scaleX(0.9711);transform-origin:0 0">Robot</div>
<div class="t s2" style="left:142.85px;top:73.00px;font-size:6.5px;color:#333;transform:scaleX(0.8884);transform-origin:0 0">Tools</div>
<div class="t s2" style="left:28.14px;top:73.00px;font-size:6.5px;color:#333;transform:scaleX(0.9274);transform-origin:0 0">File</div>
<div class="t " style="left:5.23px;top:88.80px;font-size:7px;color:#333;transform:scaleX(0.8729);transform-origin:0 0">F2</div>
<div class="t s" style="left:157.79px;top:87.00px;font-size:8.5px;color:#333;transform:scaleX(1.0000);transform-origin:0 0"><i style="font-family:Liberation Serif">f</i><i style="font-size:5px">x</i></div>
<div class="t " style="left:178.49px;top:88.00px;font-size:7.4px;color:#333;transform:scaleX(0.9337);transform-origin:0 0">=IF(D2="First-Time Purchase","-",IF(E2&lt;=1,"first",IF(AND(E2&gt;=2,E2&lt;=6),"second",IF(AND(E2&gt;=7,E2&lt;=14),"third",IF(AND(E2&gt;=15,E2&lt;=30),"fourth","fifth")))))</div>
<div class="t s" style="left:17.30px;top:118.90px;font-size:9px;color:#222;transform:scaleX(0.9253);transform-origin:0 0">DATE</div>
<div class="t s" style="left:56.13px;top:118.90px;font-size:9px;color:#222;transform:scaleX(0.8725);transform-origin:0 0">PRODUCT_CATEGORY</div>
<div class="t s" style="left:167.22px;top:118.90px;font-size:9px;color:#222;transform:scaleX(0.8942);transform-origin:0 0">PURCHASE_AMOUNT</div>
<div class="t s" style="left:276.04px;top:118.90px;font-size:9px;color:#222;transform:scaleX(0.8498);transform-origin:0 0">REPURCHASE_STATUS</div>
<div class="t s" style="left:386.53px;top:118.90px;font-size:9px;color:#222;transform:scaleX(0.8620);transform-origin:0 0">REPURCHASE_INTERVAL</div>
<div class="t s" style="left:507.19px;top:118.90px;font-size:9px;color:#222;transform:scaleX(0.9443);transform-origin:0 0">Purchase Cycle</div>
<div class="t s" style="left:17.53px;top:131.67px;font-size:9px;color:#222;transform:scaleX(0.9702);transform-origin:0 0">2025-06</div>
<div class="t s" style="left:56.07px;top:131.67px;font-size:9px;color:#222;transform:scaleX(0.9773);transform-origin:0 0">Food &amp; Beverages</div>
<div class="t s" style="right:540.29px;top:131.67px;font-size:9px;color:#222;transform:scaleX(0.9352);transform-origin:100% 0">57000</div>
<div class="t s" style="left:276.20px;top:131.67px;font-size:9px;color:#222;transform:scaleX(0.9252);transform-origin:0 0">Repurchase</div>
<div class="t s" style="right:309.51px;top:131.67px;font-size:9px;color:#222;transform:scaleX(0.9147);transform-origin:100% 0">3</div>
<div class="t s" style="left:506.97px;top:131.67px;font-size:9px;color:#222;transform:scaleX(0.9767);transform-origin:0 0">second</div>
<div class="t s" style="left:17.53px;top:144.44px;font-size:9px;color:#222;transform:scaleX(0.9702);transform-origin:0 0">2025-06</div>
<div class="t s" style="left:56.07px;top:144.44px;font-size:9px;color:#222;transform:scaleX(0.9773);transform-origin:0 0">Food &amp; Beverages</div>
<div class="t s" style="right:540.29px;top:144.44px;font-size:9px;color:#222;transform:scaleX(0.9352);transform-origin:100% 0">20000</div>
<div class="t s" style="left:276.20px;top:144.44px;font-size:9px;color:#222;transform:scaleX(0.9252);transform-origin:0 0">Repurchase</div>
<div class="t s" style="right:309.51px;top:144.44px;font-size:9px;color:#222;transform:scaleX(0.9147);transform-origin:100% 0">4</div>
<div class="t s" style="left:506.97px;top:144.44px;font-size:9px;color:#222;transform:scaleX(0.9767);transform-origin:0 0">second</div>
<div class="t s" style="left:17.53px;top:157.21px;font-size:9px;color:#222;transform:scaleX(0.9702);transform-origin:0 0">2025-06</div>
<div class="t s" style="left:56.07px;top:157.21px;font-size:9px;color:#222;transform:scaleX(0.9773);transform-origin:0 0">Food &amp; Beverages</div>
<div class="t s" style="right:540.29px;top:157.21px;font-size:9px;color:#222;transform:scaleX(0.9352);transform-origin:100% 0">50000</div>
<div class="t s" style="left:276.20px;top:157.21px;font-size:9px;color:#222;transform:scaleX(0.9252);transform-origin:0 0">Repurchase</div>
<div class="t s" style="right:309.51px;top:157.21px;font-size:9px;color:#222;transform:scaleX(0.9147);transform-origin:100% 0">3</div>
<div class="t s" style="left:506.97px;top:157.21px;font-size:9px;color:#222;transform:scaleX(0.9767);transform-origin:0 0">second</div>
<div class="t s" style="left:17.53px;top:169.98px;font-size:9px;color:#222;transform:scaleX(0.9702);transform-origin:0 0">2025-06</div>
<div class="t s" style="left:56.07px;top:169.98px;font-size:9px;color:#222;transform:scaleX(0.9773);transform-origin:0 0">Food &amp; Beverages</div>
<div class="t s" style="right:540.29px;top:169.98px;font-size:9px;color:#222;transform:scaleX(0.9352);transform-origin:100% 0">46000</div>
<div class="t s" style="left:276.20px;top:169.98px;font-size:9px;color:#222;transform:scaleX(0.9252);transform-origin:0 0">Repurchase</div>
<div class="t s" style="right:309.51px;top:169.98px;font-size:9px;color:#222;transform:scaleX(0.9147);transform-origin:100% 0">3</div>
<div class="t s" style="left:506.97px;top:169.98px;font-size:9px;color:#222;transform:scaleX(0.9767);transform-origin:0 0">second</div>
<div class="t s" style="left:17.53px;top:182.75px;font-size:9px;color:#222;transform:scaleX(0.9702);transform-origin:0 0">2025-06</div>
<div class="t s" style="left:56.07px;top:182.75px;font-size:9px;color:#222;transform:scaleX(0.9773);transform-origin:0 0">Food &amp; Beverages</div>
<div class="t s" style="right:540.29px;top:182.75px;font-size:9px;color:#222;transform:scaleX(0.9352);transform-origin:100% 0">45000</div>
<div class="t s" style="left:276.20px;top:182.75px;font-size:9px;color:#222;transform:scaleX(0.9252);transform-origin:0 0">Repurchase</div>
<div class="t s" style="right:309.51px;top:182.75px;font-size:9px;color:#222;transform:scaleX(0.9147);transform-origin:100% 0">4</div>
<div class="t s" style="left:506.97px;top:182.75px;font-size:9px;color:#222;transform:scaleX(0.9767);transform-origin:0 0">second</div>
<div class="t s" style="left:17.53px;top:195.52px;font-size:9px;color:#222;transform:scaleX(0.9702);transform-origin:0 0">2025-06</div>
<div class="t s" style="left:56.07px;top:195.52px;font-size:9px;color:#222;transform:scaleX(0.9773);transform-origin:0 0">Food &amp; Beverages</div>
<div class="t s" style="right:540.29px;top:195.52px;font-size:9px;color:#222;transform:scaleX(0.9352);transform-origin:100% 0">32000</div>
<div class="t s" style="left:276.20px;top:195.52px;font-size:9px;color:#222;transform:scaleX(0.9252);transform-origin:0 0">Repurchase</div>
<div class="t s" style="right:309.51px;top:195.52px;font-size:9px;color:#222;transform:scaleX(0.9147);transform-origin:100% 0">3</div>
<div class="t s" style="left:506.97px;top:195.52px;font-size:9px;color:#222;transform:scaleX(0.9767);transform-origin:0 0">second</div>
<div class="t s" style="left:17.53px;top:208.29px;font-size:9px;color:#222;transform:scaleX(0.9702);transform-origin:0 0">2025-06</div>
<div class="t s" style="left:56.07px;top:208.29px;font-size:9px;color:#222;transform:scaleX(0.9773);transform-origin:0 0">Food &amp; Beverages</div>
<div class="t s" style="right:540.29px;top:208.29px;font-size:9px;color:#222;transform:scaleX(0.9352);transform-origin:100% 0">54000</div>
<div class="t s" style="left:276.20px;top:208.29px;font-size:9px;color:#222;transform:scaleX(0.9252);transform-origin:0 0">Repurchase</div>
<div class="t s" style="right:309.51px;top:208.29px;font-size:9px;color:#222;transform:scaleX(0.9147);transform-origin:100% 0">4</div>
<div class="t s" style="left:506.97px;top:208.29px;font-size:9px;color:#222;transform:scaleX(0.9767);transform-origin:0 0">second</div>
<div class="t s" style="left:17.53px;top:221.06px;font-size:9px;color:#222;transform:scaleX(0.9702);transform-origin:0 0">2025-06</div>
<div class="t s" style="left:56.07px;top:221.06px;font-size:9px;color:#222;transform:scaleX(0.9773);transform-origin:0 0">Food &amp; Beverages</div>
<div class="t s" style="right:540.29px;top:221.06px;font-size:9px;color:#222;transform:scaleX(0.9352);transform-origin:100% 0">41000</div>
<div class="t s" style="left:276.20px;top:221.06px;font-size:9px;color:#222;transform:scaleX(0.9252);transform-origin:0 0">Repurchase</div>
<div class="t s" style="right:309.51px;top:221.06px;font-size:9px;color:#222;transform:scaleX(0.9147);transform-origin:100% 0">3</div>
<div class="t s" style="left:506.97px;top:221.06px;font-size:9px;color:#222;transform:scaleX(0.9767);transform-origin:0 0">second</div>
<div class="t s" style="left:17.53px;top:233.83px;font-size:9px;color:#222;transform:scaleX(0.9702);transform-origin:0 0">2025-06</div>
<div class="t s" style="left:56.07px;top:233.83px;font-size:9px;color:#222;transform:scaleX(0.9773);transform-origin:0 0">Food &amp; Beverages</div>
<div class="t s" style="right:540.29px;top:233.83px;font-size:9px;color:#222;transform:scaleX(0.9352);transform-origin:100% 0">21000</div>
<div class="t s" style="left:276.20px;top:233.83px;font-size:9px;color:#222;transform:scaleX(0.9252);transform-origin:0 0">Repurchase</div>
<div class="t s" style="right:309.51px;top:233.83px;font-size:9px;color:#222;transform:scaleX(0.9147);transform-origin:100% 0">3</div>
<div class="t s" style="left:506.97px;top:233.83px;font-size:9px;color:#222;transform:scaleX(0.9767);transform-origin:0 0">second</div>
<div class="t s" style="left:17.53px;top:246.60px;font-size:9px;color:#222;transform:scaleX(0.9702);transform-origin:0 0">2025-06</div>
<div class="t s" style="left:56.07px;top:246.60px;font-size:9px;color:#222;transform:scaleX(0.9773);transform-origin:0 0">Food &amp; Beverages</div>
<div class="t s" style="right:540.29px;top:246.60px;font-size:9px;color:#222;transform:scaleX(0.9352);transform-origin:100% 0">21000</div>
<div class="t s" style="left:276.20px;top:246.60px;font-size:9px;color:#222;transform:scaleX(0.9252);transform-origin:0 0">Repurchase</div>
<div class="t s" style="right:309.51px;top:246.60px;font-size:9px;color:#222;transform:scaleX(0.9147);transform-origin:100% 0">3</div>
<div class="t s" style="left:506.97px;top:246.60px;font-size:9px;color:#222;transform:scaleX(0.9767);transform-origin:0 0">second</div>
<div class="t s" style="left:17.53px;top:259.37px;font-size:9px;color:#222;transform:scaleX(0.9702);transform-origin:0 0">2025-06</div>
<div class="t s" style="left:56.07px;top:259.37px;font-size:9px;color:#222;transform:scaleX(0.9773);transform-origin:0 0">Food &amp; Beverages</div>
<div class="t s" style="right:540.29px;top:259.37px;font-size:9px;color:#222;transform:scaleX(0.9352);transform-origin:100% 0">52000</div>
<div class="t s" style="left:276.20px;top:259.37px;font-size:9px;color:#222;transform:scaleX(0.9252);transform-origin:0 0">Repurchase</div>
<div class="t s" style="right:309.51px;top:259.37px;font-size:9px;color:#222;transform:scaleX(0.9147);transform-origin:100% 0">3</div>
<div class="t s" style="left:506.97px;top:259.37px;font-size:9px;color:#222;transform:scaleX(0.9767);transform-origin:0 0">second</div>
<div class="t s" style="left:17.53px;top:272.14px;font-size:9px;color:#222;transform:scaleX(0.9702);transform-origin:0 0">2025-06</div>
<div class="t s" style="left:56.07px;top:272.14px;font-size:9px;color:#222;transform:scaleX(0.9773);transform-origin:0 0">Food &amp; Beverages</div>
<div class="t s" style="right:540.29px;top:272.14px;font-size:9px;color:#222;transform:scaleX(0.9352);transform-origin:100% 0">38000</div>
<div class="t s" style="left:276.20px;top:272.14px;font-size:9px;color:#222;transform:scaleX(0.9252);transform-origin:0 0">Repurchase</div>
<div class="t s" style="right:309.51px;top:272.14px;font-size:9px;color:#222;transform:scaleX(0.9147);transform-origin:100% 0">3</div>
<div class="t s" style="left:506.97px;top:272.14px;font-size:9px;color:#222;transform:scaleX(0.9767);transform-origin:0 0">second</div>
<div class="t s" style="left:17.53px;top:284.91px;font-size:9px;color:#222;transform:scaleX(0.9702);transform-origin:0 0">2025-06</div>
<div class="t s" style="left:56.07px;top:284.91px;font-size:9px;color:#222;transform:scaleX(0.9773);transform-origin:0 0">Food &amp; Beverages</div>
<div class="t s" style="right:540.29px;top:284.91px;font-size:9px;color:#222;transform:scaleX(0.9352);transform-origin:100% 0">53000</div>
<div class="t s" style="left:276.20px;top:284.91px;font-size:9px;color:#222;transform:scaleX(0.9252);transform-origin:0 0">Repurchase</div>
<div class="t s" style="right:309.51px;top:284.91px;font-size:9px;color:#222;transform:scaleX(0.9147);transform-origin:100% 0">3</div>
<div class="t s" style="left:506.97px;top:284.91px;font-size:9px;color:#222;transform:scaleX(0.9767);transform-origin:0 0">second</div>
<div class="t s" style="left:17.53px;top:297.68px;font-size:9px;color:#222;transform:scaleX(0.9702);transform-origin:0 0">2025-06</div>
<div class="t s" style="left:56.07px;top:297.68px;font-size:9px;color:#222;transform:scaleX(0.9773);transform-origin:0 0">Food &amp; Beverages</div>
<div class="t s" style="right:540.29px;top:297.68px;font-size:9px;color:#222;transform:scaleX(0.9352);transform-origin:100% 0">49000</div>
<div class="t s" style="left:276.20px;top:297.68px;font-size:9px;color:#222;transform:scaleX(0.9252);transform-origin:0 0">Repurchase</div>
<div class="t s" style="right:309.51px;top:297.68px;font-size:9px;color:#222;transform:scaleX(0.9147);transform-origin:100% 0">3</div>
<div class="t s" style="left:506.97px;top:297.68px;font-size:9px;color:#222;transform:scaleX(0.9767);transform-origin:0 0">second</div>
<div class="t s" style="left:17.53px;top:310.45px;font-size:9px;color:#222;transform:scaleX(0.9702);transform-origin:0 0">2025-06</div>
<div class="t s" style="left:56.07px;top:310.45px;font-size:9px;color:#222;transform:scaleX(0.9773);transform-origin:0 0">Food &amp; Beverages</div>
<div class="t s" style="right:540.29px;top:310.45px;font-size:9px;color:#222;transform:scaleX(0.9352);transform-origin:100% 0">20000</div>
<div class="t s" style="left:276.20px;top:310.45px;font-size:9px;color:#222;transform:scaleX(0.9252);transform-origin:0 0">Repurchase</div>
<div class="t s" style="right:309.51px;top:310.45px;font-size:9px;color:#222;transform:scaleX(0.9147);transform-origin:100% 0">3</div>
<div class="t s" style="left:506.97px;top:310.45px;font-size:9px;color:#222;transform:scaleX(0.9767);transform-origin:0 0">second</div>
<div class="t s" style="left:17.53px;top:323.22px;font-size:9px;color:#222;transform:scaleX(0.9702);transform-origin:0 0">2025-06</div>
<div class="t s" style="left:56.07px;top:323.22px;font-size:9px;color:#222;transform:scaleX(0.9773);transform-origin:0 0">Food &amp; Beverages</div>
<div class="t s" style="right:540.29px;top:323.22px;font-size:9px;color:#222;transform:scaleX(0.9352);transform-origin:100% 0">33000</div>
<div class="t s" style="left:276.20px;top:323.22px;font-size:9px;color:#222;transform:scaleX(0.9252);transform-origin:0 0">Repurchase</div>
<div class="t s" style="right:309.51px;top:323.22px;font-size:9px;color:#222;transform:scaleX(0.9147);transform-origin:100% 0">3</div>
<div class="t s" style="left:506.97px;top:323.22px;font-size:9px;color:#222;transform:scaleX(0.9767);transform-origin:0 0">second</div>
<div class="t s" style="left:17.53px;top:335.99px;font-size:9px;color:#222;transform:scaleX(0.9702);transform-origin:0 0">2025-06</div>
<div class="t s" style="left:56.07px;top:335.99px;font-size:9px;color:#222;transform:scaleX(0.9773);transform-origin:0 0">Food &amp; Beverages</div>
<div class="t s" style="right:540.29px;top:335.99px;font-size:9px;color:#222;transform:scaleX(0.9352);transform-origin:100% 0">23000</div>
<div class="t s" style="left:276.20px;top:335.99px;font-size:9px;color:#222;transform:scaleX(0.9252);transform-origin:0 0">Repurchase</div>
<div class="t s" style="right:309.51px;top:335.99px;font-size:9px;color:#222;transform:scaleX(0.9147);transform-origin:100% 0">3</div>
<div class="t s" style="left:506.97px;top:335.99px;font-size:9px;color:#222;transform:scaleX(0.9767);transform-origin:0 0">second</div>
<div class="t s" style="left:17.53px;top:348.76px;font-size:9px;color:#222;transform:scaleX(0.9702);transform-origin:0 0">2025-06</div>
<div class="t s" style="left:56.07px;top:348.76px;font-size:9px;color:#222;transform:scaleX(0.9773);transform-origin:0 0">Food &amp; Beverages</div>
<div class="t s" style="right:540.29px;top:348.76px;font-size:9px;color:#222;transform:scaleX(0.9352);transform-origin:100% 0">32000</div>
<div class="t s" style="left:276.20px;top:348.76px;font-size:9px;color:#222;transform:scaleX(0.9252);transform-origin:0 0">Repurchase</div>
<div class="t s" style="right:309.51px;top:348.76px;font-size:9px;color:#222;transform:scaleX(0.9147);transform-origin:100% 0">3</div>
<div class="t s" style="left:506.97px;top:348.76px;font-size:9px;color:#222;transform:scaleX(0.9767);transform-origin:0 0">second</div>
<div class="t s" style="left:17.53px;top:361.53px;font-size:9px;color:#222;transform:scaleX(0.9702);transform-origin:0 0">2025-06</div>
<div class="t s" style="left:56.07px;top:361.53px;font-size:9px;color:#222;transform:scaleX(0.9773);transform-origin:0 0">Food &amp; Beverages</div>
<div class="t s" style="right:540.29px;top:361.53px;font-size:9px;color:#222;transform:scaleX(0.9352);transform-origin:100% 0">47000</div>
<div class="t s" style="left:276.20px;top:361.53px;font-size:9px;color:#222;transform:scaleX(0.9252);transform-origin:0 0">Repurchase</div>
<div class="t s" style="right:309.51px;top:361.53px;font-size:9px;color:#222;transform:scaleX(0.9147);transform-origin:100% 0">3</div>
<div class="t s" style="left:506.97px;top:361.53px;font-size:9px;color:#222;transform:scaleX(0.9767);transform-origin:0 0">second</div>
<div class="t s" style="left:17.53px;top:374.30px;font-size:9px;color:#222;transform:scaleX(0.9702);transform-origin:0 0">2025-06</div>
<div class="t s" style="left:56.07px;top:374.30px;font-size:9px;color:#222;transform:scaleX(0.9773);transform-origin:0 0">Food &amp; Beverages</div>
<div class="t s" style="right:540.29px;top:374.30px;font-size:9px;color:#222;transform:scaleX(0.9352);transform-origin:100% 0">28000</div>
<div class="t s" style="left:276.20px;top:374.30px;font-size:9px;color:#222;transform:scaleX(0.9252);transform-origin:0 0">Repurchase</div>
<div class="t s" style="right:309.51px;top:374.30px;font-size:9px;color:#222;transform:scaleX(0.9147);transform-origin:100% 0">4</div>
<div class="t s" style="left:506.97px;top:374.30px;font-size:9px;color:#222;transform:scaleX(0.9767);transform-origin:0 0">second</div>
<div class="t s" style="left:17.53px;top:387.07px;font-size:9px;color:#222;transform:scaleX(0.9702);transform-origin:0 0">2025-06</div>
<div class="t s" style="left:56.07px;top:387.07px;font-size:9px;color:#222;transform:scaleX(0.9773);transform-origin:0 0">Food &amp; Beverages</div>
<div class="t s" style="right:540.29px;top:387.07px;font-size:9px;color:#222;transform:scaleX(0.9352);transform-origin:100% 0">22000</div>
<div class="t s" style="left:276.20px;top:387.07px;font-size:9px;color:#222;transform:scaleX(0.9252);transform-origin:0 0">Repurchase</div>
<div class="t s" style="right:309.51px;top:387.07px;font-size:9px;color:#222;transform:scaleX(0.9147);transform-origin:100% 0">3</div>
<div class="t s" style="left:506.97px;top:387.07px;font-size:9px;color:#222;transform:scaleX(0.9767);transform-origin:0 0">second</div>
<div class="t s" style="left:17.53px;top:399.84px;font-size:9px;color:#222;transform:scaleX(0.9702);transform-origin:0 0">2025-06</div>
<div class="t s" style="left:56.07px;top:399.84px;font-size:9px;color:#222;transform:scaleX(0.9773);transform-origin:0 0">Food &amp; Beverages</div>
<div class="t s" style="right:540.29px;top:399.84px;font-size:9px;color:#222;transform:scaleX(0.9352);transform-origin:100% 0">19000</div>
<div class="t s" style="left:276.20px;top:399.84px;font-size:9px;color:#222;transform:scaleX(0.9252);transform-origin:0 0">Repurchase</div>
<div class="t s" style="right:309.51px;top:399.84px;font-size:9px;color:#222;transform:scaleX(0.9147);transform-origin:100% 0">3</div>
<div class="t s" style="left:506.97px;top:399.84px;font-size:9px;color:#222;transform:scaleX(0.9767);transform-origin:0 0">second</div>
<div class="t s" style="left:17.53px;top:412.61px;font-size:9px;color:#222;transform:scaleX(0.9702);transform-origin:0 0">2025-06</div>
<div class="t s" style="left:56.07px;top:412.61px;font-size:9px;color:#222;transform:scaleX(0.9773);transform-origin:0 0">Food &amp; Beverages</div>
<div class="t s" style="right:540.29px;top:412.61px;font-size:9px;color:#222;transform:scaleX(0.9352);transform-origin:100% 0">44000</div>
<div class="t s" style="left:276.20px;top:412.61px;font-size:9px;color:#222;transform:scaleX(0.9252);transform-origin:0 0">Repurchase</div>
<div class="t s" style="right:309.51px;top:412.61px;font-size:9px;color:#222;transform:scaleX(0.9147);transform-origin:100% 0">4</div>
<div class="t s" style="left:506.97px;top:412.61px;font-size:9px;color:#222;transform:scaleX(0.9767);transform-origin:0 0">second</div>
<div class="t s" style="left:17.53px;top:425.38px;font-size:9px;color:#222;transform:scaleX(0.9702);transform-origin:0 0">2025-06</div>
<div class="t s" style="left:56.07px;top:425.38px;font-size:9px;color:#222;transform:scaleX(0.9773);transform-origin:0 0">Food &amp; Beverages</div>
<div class="t s" style="right:540.29px;top:425.38px;font-size:9px;color:#222;transform:scaleX(0.9352);transform-origin:100% 0">52000</div>
<div class="t s" style="left:276.20px;top:425.38px;font-size:9px;color:#222;transform:scaleX(0.9252);transform-origin:0 0">Repurchase</div>
<div class="t s" style="right:309.51px;top:425.38px;font-size:9px;color:#222;transform:scaleX(0.9147);transform-origin:100% 0">3</div>
<div class="t s" style="left:506.97px;top:425.38px;font-size:9px;color:#222;transform:scaleX(0.9767);transform-origin:0 0">second</div>
<div class="t s" style="left:17.53px;top:438.15px;font-size:9px;color:#222;transform:scaleX(0.9702);transform-origin:0 0">2025-06</div>
<div class="t s" style="left:56.07px;top:438.15px;font-size:9px;color:#222;transform:scaleX(0.9773);transform-origin:0 0">Food &amp; Beverages</div>
<div class="t s" style="right:540.29px;top:438.15px;font-size:9px;color:#222;transform:scaleX(0.9352);transform-origin:100% 0">40000</div>
<div class="t s" style="left:276.20px;top:438.15px;font-size:9px;color:#222;transform:scaleX(0.9252);transform-origin:0 0">Repurchase</div>
<div class="t s" style="right:309.51px;top:438.15px;font-size:9px;color:#222;transform:scaleX(0.9147);transform-origin:100% 0">3</div>
<div class="t s" style="left:506.97px;top:438.15px;font-size:9px;color:#222;transform:scaleX(0.9767);transform-origin:0 0">second</div>
<div class="t s" style="left:17.53px;top:450.92px;font-size:9px;color:#222;transform:scaleX(0.9702);transform-origin:0 0">2025-06</div>
<div class="t s" style="left:56.07px;top:450.92px;font-size:9px;color:#222;transform:scaleX(0.9773);transform-origin:0 0">Food &amp; Beverages</div>
<div class="t s" style="right:540.29px;top:450.92px;font-size:9px;color:#222;transform:scaleX(0.9352);transform-origin:100% 0">38000</div>
<div class="t s" style="left:276.20px;top:450.92px;font-size:9px;color:#222;transform:scaleX(0.9252);transform-origin:0 0">Repurchase</div>
<div class="t s" style="right:309.51px;top:450.92px;font-size:9px;color:#222;transform:scaleX(0.9147);transform-origin:100% 0">3</div>
<div class="t s" style="left:506.97px;top:450.92px;font-size:9px;color:#222;transform:scaleX(0.9767);transform-origin:0 0">second</div>
<div class="t s" style="left:17.53px;top:463.69px;font-size:9px;color:#222;transform:scaleX(0.9702);transform-origin:0 0">2025-06</div>
<div class="t s" style="left:56.07px;top:463.69px;font-size:9px;color:#222;transform:scaleX(0.9773);transform-origin:0 0">Food &amp; Beverages</div>
<div class="t s" style="right:540.29px;top:463.69px;font-size:9px;color:#222;transform:scaleX(0.9352);transform-origin:100% 0">51000</div>
<div class="t s" style="left:276.20px;top:463.69px;font-size:9px;color:#222;transform:scaleX(0.9252);transform-origin:0 0">Repurchase</div>
<div class="t s" style="right:309.51px;top:463.69px;font-size:9px;color:#222;transform:scaleX(0.9147);transform-origin:100% 0">3</div>
<div class="t s" style="left:506.97px;top:463.69px;font-size:9px;color:#222;transform:scaleX(0.9767);transform-origin:0 0">second</div>
<div class="t s" style="left:17.53px;top:476.46px;font-size:9px;color:#222;transform:scaleX(0.9702);transform-origin:0 0">2025-06</div>
<div class="t s" style="left:56.07px;top:476.46px;font-size:9px;color:#222;transform:scaleX(0.9773);transform-origin:0 0">Food &amp; Beverages</div>
<div class="t s" style="right:540.29px;top:476.46px;font-size:9px;color:#222;transform:scaleX(0.9352);transform-origin:100% 0">20000</div>
<div class="t s" style="left:276.20px;top:476.46px;font-size:9px;color:#222;transform:scaleX(0.9252);transform-origin:0 0">Repurchase</div>
<div class="t s" style="right:309.51px;top:476.46px;font-size:9px;color:#222;transform:scaleX(0.9147);transform-origin:100% 0">3</div>
<div class="t s" style="left:506.97px;top:476.46px;font-size:9px;color:#222;transform:scaleX(0.9767);transform-origin:0 0">second</div>
<div class="t s" style="left:17.53px;top:489.23px;font-size:9px;color:#222;transform:scaleX(0.9702);transform-origin:0 0">2025-06</div>
<div class="t s" style="left:56.07px;top:489.23px;font-size:9px;color:#222;transform:scaleX(0.9773);transform-origin:0 0">Food &amp; Beverages</div>
<div class="t s" style="right:540.29px;top:489.23px;font-size:9px;color:#222;transform:scaleX(0.9352);transform-origin:100% 0">58000</div>
<div class="t s" style="left:276.20px;top:489.23px;font-size:9px;color:#222;transform:scaleX(0.9252);transform-origin:0 0">Repurchase</div>
<div class="t s" style="right:309.51px;top:489.23px;font-size:9px;color:#222;transform:scaleX(0.9147);transform-origin:100% 0">3</div>
<div class="t s" style="left:506.97px;top:489.23px;font-size:9px;color:#222;transform:scaleX(0.9767);transform-origin:0 0">second</div>
<div class="t s" style="left:646.49px;top:157.21px;font-size:9px;color:#222;transform:scaleX(0.9500);transform-origin:0 0">first</div>
<div class="t s" style="right:73.90px;top:157.21px;font-size:9px;color:#222;transform:scaleX(0.9300);transform-origin:100% 0">0</div>
<div class="t s" style="right:21.20px;top:157.21px;font-size:9px;color:#222;transform:scaleX(0.9300);transform-origin:100% 0">1</div>
<div class="t s" style="left:646.49px;top:169.98px;font-size:9px;color:#222;transform:scaleX(0.9500);transform-origin:0 0">second</div>
<div class="t s" style="right:73.90px;top:169.98px;font-size:9px;color:#222;transform:scaleX(0.9300);transform-origin:100% 0">2</div>
<div class="t s" style="right:21.20px;top:169.98px;font-size:9px;color:#222;transform:scaleX(0.9300);transform-origin:100% 0">6</div>
<div class="t s" style="left:646.49px;top:182.75px;font-size:9px;color:#222;transform:scaleX(0.9500);transform-origin:0 0">third</div>
<div class="t s" style="right:73.90px;top:182.75px;font-size:9px;color:#222;transform:scaleX(0.9300);transform-origin:100% 0">7</div>
<div class="t s" style="right:21.20px;top:182.75px;font-size:9px;color:#222;transform:scaleX(0.9300);transform-origin:100% 0">14</div>
<div class="t s" style="left:646.49px;top:195.52px;font-size:9px;color:#222;transform:scaleX(0.9500);transform-origin:0 0">fourth</div>
<div class="t s" style="right:73.90px;top:195.52px;font-size:9px;color:#222;transform:scaleX(0.9300);transform-origin:100% 0">15</div>
<div class="t s" style="right:21.20px;top:195.52px;font-size:9px;color:#222;transform:scaleX(0.9300);transform-origin:100% 0">30</div>
<div class="t s" style="left:646.49px;top:208.29px;font-size:9px;color:#222;transform:scaleX(0.9500);transform-origin:0 0">fifth</div>
<div class="t s" style="right:73.90px;top:208.29px;font-size:9px;color:#222;transform:scaleX(0.9300);transform-origin:100% 0">31</div>
<div class="t s" style="right:21.20px;top:208.29px;font-size:9px;color:#222;transform:scaleX(0.9300);transform-origin:100% 0">60</div>
<div class="t s" style="left:692.83px;top:144.44px;font-size:9px;color:#222;transform:scaleX(0.8666);transform-origin:0 0">REPURCHASE_INTERVAL</div>
<div class="t " style="left:57.62px;top:502.00px;font-size:7px;color:#555;transform:scaleX(0.8994);transform-origin:0 0">V_Retention</div>
<div class="t " style="left:105.90px;top:502.00px;font-size:7px;color:#217346;transform:scaleX(0.9491);transform-origin:0 0">D1</div>
<div class="t " style="left:126.20px;top:502.00px;font-size:7px;color:#555;transform:scaleX(0.9582);transform-origin:0 0">P1</div>
<div class="t " style="left:2.66px;top:515.30px;font-size:6.3px;color:#444;transform:scaleX(0.8999);transform-origin:0 0">Ready</div>
<div class="t " style="left:790.25px;top:515.00px;font-size:6.3px;color:#444;transform:scaleX(0.9204);transform-origin:0 0">115%</div></body></html>
